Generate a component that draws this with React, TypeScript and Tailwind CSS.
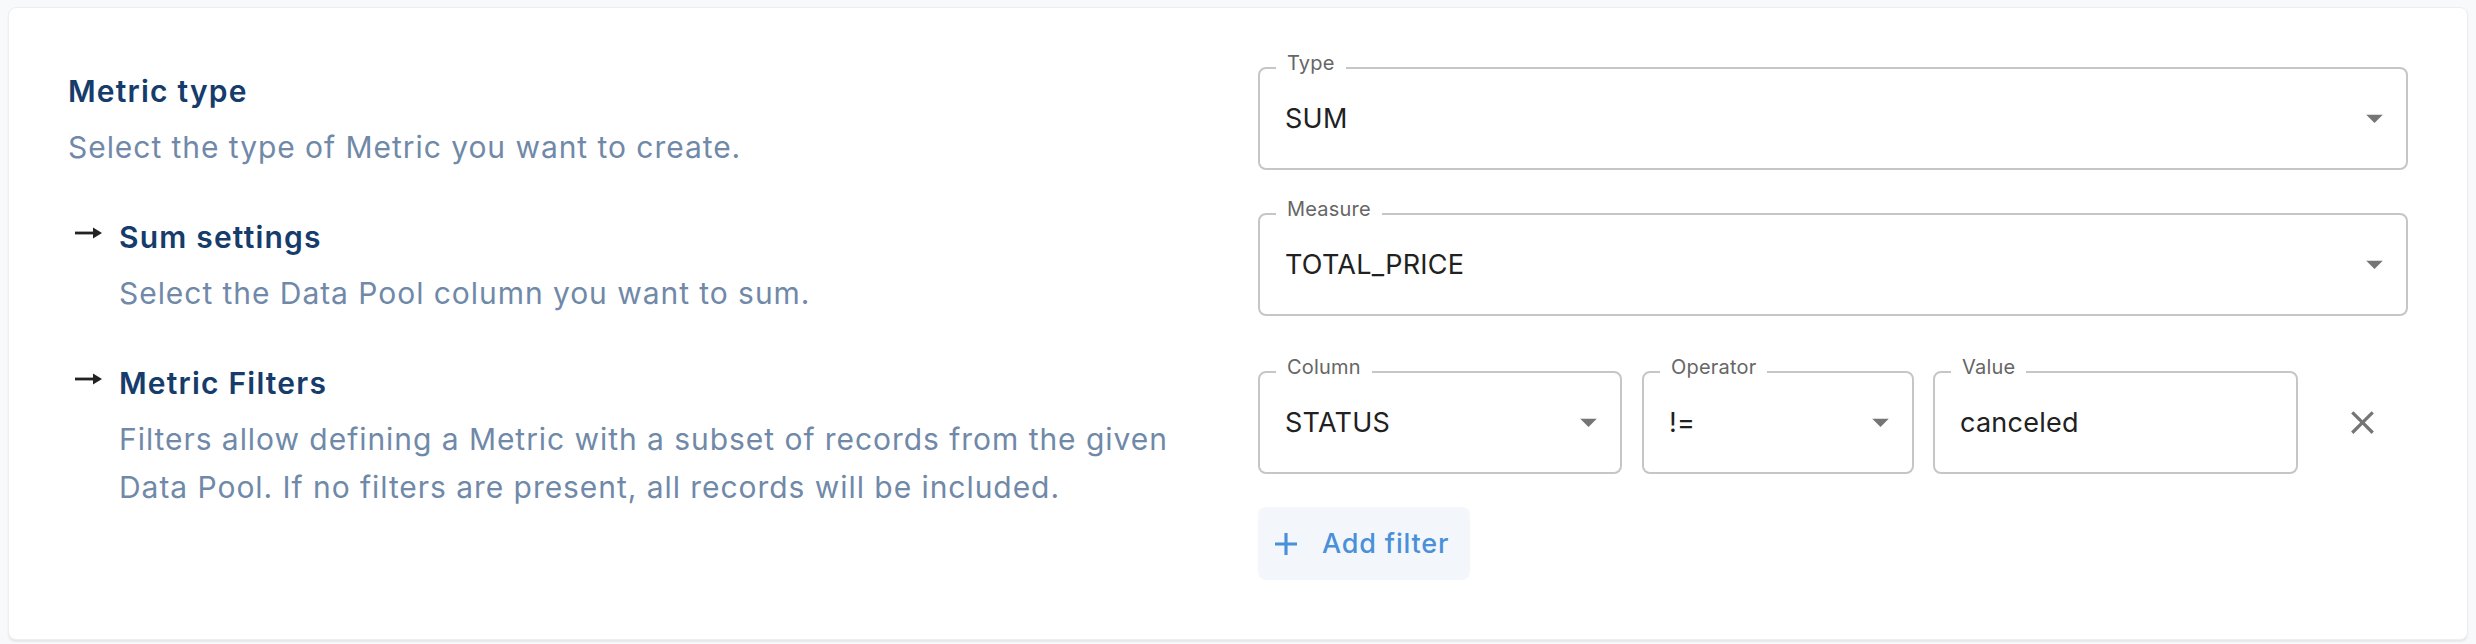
import React from "react";

function Arrow() {
  return (
    <svg width="27" height="12" viewBox="0 0 27 12" className="mt-[13px] shrink-0">
      <rect x="0" y="4.6" width="20" height="2.8" fill="#222222" />
      <polygon points="18,0.5 27,6 18,11.5" fill="#222222" />
    </svg>
  );
}

function DropArrow() {
  return (
    <svg width="17" height="9" viewBox="0 0 17 9" className="absolute right-[23px] top-1/2 -translate-y-1/2">
      <polygon points="0,0 17,0 8.5,8.5" fill="#757575" />
    </svg>
  );
}

function Field({
  label,
  value,
  select = true,
  className = "",
}: {
  label: string;
  value: string;
  select?: boolean;
  className?: string;
}) {
  return (
    <div
      className={
        "relative h-[103px] rounded-[8px] border-2 border-[#c6c6c6] bg-white flex items-center pl-[25px] " +
        className
      }
    >
      <span className="absolute left-[16px] top-[-18px] bg-white px-[11px] text-[20px] leading-[24px] tracking-[0.2px] text-[#666666]">
        {label}
      </span>
      <span className="text-[27px] leading-[33px] tracking-[0.25px] text-[#212121]">{value}</span>
      {select && <DropArrow />}
    </div>
  );
}

export default function App() {
  return (
    <div className="min-h-screen bg-[#f8f9fb] pl-[8px] pt-[7px] font-['Inter',sans-serif]">
      <div className="w-[2460px] rounded-[8px] border border-[#eceef2] bg-white p-[59px] shadow-[0_2px_2px_rgba(0,0,0,0.07)]">
        <div className="grid grid-cols-2 gap-[40px]">
          {/* Left column */}
          <div className="flex flex-col pt-[1px]">
            <div>
              <h2 className="text-[30px] leading-[46px] font-semibold tracking-[1.2px] text-[#163c6b]">Metric type</h2>
              <p className="mt-[9px] text-[30px] leading-[48px] tracking-[0.95px] text-[#7089a8]">
                Select the type of Metric you want to create.
              </p>
            </div>
            <div className="mt-[43px]">
              <div className="flex items-start pl-[7px]">
                <Arrow />
                <h2 className="ml-[17px] text-[30px] leading-[46px] font-semibold tracking-[1.2px] text-[#163c6b]">
                  Sum settings
                </h2>
              </div>
              <p className="mt-[9px] ml-[51px] text-[30px] leading-[48px] tracking-[0.95px] text-[#7089a8]">
                Select the Data Pool column you want to sum.
              </p>
            </div>
            <div className="mt-[43px]">
              <div className="flex items-start pl-[7px]">
                <Arrow />
                <h2 className="ml-[17px] text-[30px] leading-[46px] font-semibold tracking-[1.2px] text-[#163c6b]">
                  Metric Filters
                </h2>
              </div>
              <p className="mt-[9px] ml-[51px] text-[30px] leading-[48px] tracking-[0.95px] text-[#7089a8]">
                Filters allow defining a Metric with a subset of records from the given Data Pool. If no filters are
                present, all records will be included.
              </p>
            </div>
          </div>

          {/* Right column */}
          <div className="flex flex-col">
            <Field label="Type" value="SUM" />
            <Field label="Measure" value="TOTAL_PRICE" className="mt-[43px]" />
            <div className="mt-[55px] flex items-center">
              <Field label="Column" value="STATUS" className="w-[364px] shrink-0" />
              <Field label="Operator" value="!=" className="ml-[20px] w-[272px] shrink-0" />
              <Field label="Value" value="canceled" select={false} className="ml-[19px] w-[365px] shrink-0" />
              <button className="ml-[32px] flex h-[64px] w-[64px] items-center justify-center rounded-full">
                <svg width="39" height="39" viewBox="0 0 24 24" fill="#757575">
                  <path d="M19 6.41 17.59 5 12 10.59 6.41 5 5 6.41 10.59 12 5 17.59 6.41 19 12 13.41 17.59 19 19 17.59 13.41 12z" />
                </svg>
              </button>
            </div>
            <button className="mt-[33px] flex h-[73px] w-[212px] items-center rounded-[8px] bg-[#f3f7fc] pl-[17px]">
              <svg width="22" height="22" viewBox="5 5 14 14" fill="#4a90d9">
                <path d="M19 13h-6v6h-2v-6H5v-2h6V5h2v6h6v2z" />
              </svg>
              <span className="ml-[25px] text-[27px] leading-[33px] font-medium tracking-[0.03em] text-[#4a90d9]">
                Add filter
              </span>
            </button>
          </div>
        </div>
      </div>
    </div>
  );
}
